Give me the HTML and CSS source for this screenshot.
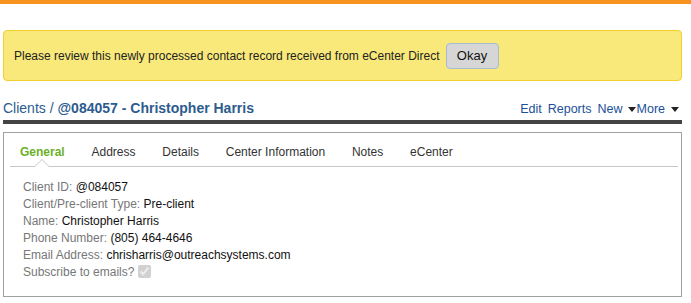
FILE: index.html
```html
<!DOCTYPE html>
<html lang="en">
<head>
    <meta charset="UTF-8">
    <title>Clients / @084057 - Christopher Harris</title>
    <link rel="stylesheet" href="styles.css">
</head>
<body>
    <div class="topbar"></div>
    <div class="page">
        <div class="alert">
            <span>Please review this newly processed contact record received from eCenter Direct</span>
            <button type="button" class="okay">Okay</button>
        </div>
        <div class="titlebar">
            <h2><span class="crumb">Clients /</span> @084057 - Christopher Harris</h2>
            <div class="actions">
                <a href="#">Edit</a>
                <a href="#">Reports</a>
                <a href="#" class="drop">New<span class="caret"></span></a>
                <a href="#" class="drop more">More<span class="caret"></span></a>
            </div>
        </div>
        <div class="panel">
            <ul class="tabs">
                <li class="active">General</li>
                <li>Address</li>
                <li>Details</li>
                <li>Center Information</li>
                <li>Notes</li>
                <li>eCenter</li>
            </ul>
            <div class="fields">
                <div><span class="label">Client ID:</span> @084057</div>
                <div><span class="label">Client/Pre-client Type:</span> Pre-client</div>
                <div><span class="label">Name:</span> Christopher Harris</div>
                <div><span class="label">Phone Number:</span> (805) 464-4646</div>
                <div><span class="label">Email Address:</span> chrisharris@outreachsystems.com</div>
                <div><span class="label">Subscribe to emails?</span> <input type="checkbox" checked disabled></div>
            </div>
        </div>
    </div>
</body>
</html>
```

FILE: styles.css
```css
/* page */
body {
    margin: 0;
    font-family: "Liberation Sans", Arial, sans-serif;
    color: #111;
    background: #fff;
}
.topbar {
    height: 4px;
    background-color: #f7931e;
}
.page {
    padding: 26px 9px 0 3px;
}

/* alert */
.alert {
    display: flex;
    align-items: center;
    gap: 6px;
    height: 51px;
    box-sizing: border-box;
    padding: 0 10px;
    background-color: #f9e97a;
    border: 1px solid #f2cf2c;
    border-radius: 4px;
    font-size: 12px;
    color: #222;
}
.okay {
    height: 26px;
    width: 53px;
    padding: 0;
    font-family: inherit;
    font-size: 13px;
    color: #111;
    background-color: #d6d6d6;
    border: 1px solid #a7bccf;
    border-radius: 4px;
}

/* title row */
.titlebar {
    display: flex;
    justify-content: space-between;
    align-items: flex-end;
    margin-top: 19px;
    padding-bottom: 4px;
    border-bottom: 4px solid #444;
}
.titlebar h2 {
    margin: 0;
    font-size: 14px;
    font-weight: bold;
    color: #2c5b8e;
}
.crumb {
    font-weight: normal;
}
.actions {
    display: flex;
    align-items: center;
    font-size: 12.5px;
    padding-right: 3px;
}
.actions a {
    display: flex;
    align-items: center;
    color: #1b4f99;
    text-decoration: none;
    margin-left: 6px;
}
.actions a.more {
    margin-left: 1px;
}
.caret {
    width: 0;
    height: 0;
    margin-left: 5px;
    border-left: 4px solid transparent;
    border-right: 4px solid transparent;
    border-top: 5px solid #222;
}
.more .caret {
    margin-left: 6px;
}

/* panel */
.panel {
    margin-top: 8px;
    height: 165px;
    box-sizing: border-box;
    border: 1px solid #a0a0a0;
    padding: 0 3px 0 6px;
}
.tabs {
    list-style: none;
    margin: 0;
    padding: 12px 0 0 0;
    display: flex;
    height: 34px;
    box-sizing: border-box;
    border-bottom: 1px solid #c8c8c8;
    font-size: 12px;
    color: #333;
}
.tabs li {
    position: relative;
    padding: 0 13.4px;
}
.tabs li:first-child {
    padding-left: 10px;
}
.tabs li.active {
    color: #6cb12a;
    font-weight: bold;
}
.tabs li.active::before,
.tabs li.active::after {
    content: "";
    position: absolute;
    left: 24px;
    bottom: -1px;
    border-left: 8px solid transparent;
    border-right: 8px solid transparent;
    border-bottom: 8px solid #c8c8c8;
}
.tabs li.active::after {
    left: 25px;
    border-left-width: 7px;
    border-right-width: 7px;
    border-bottom: 7px solid #fff;
}
.fields {
    padding: 12px 0 0 13px;
    font-size: 12px;
    line-height: 17px;
}
.label {
    color: #777;
}
.fields input {
    margin: 0;
    width: 13px;
    height: 13px;
    vertical-align: -2px;
}
```
